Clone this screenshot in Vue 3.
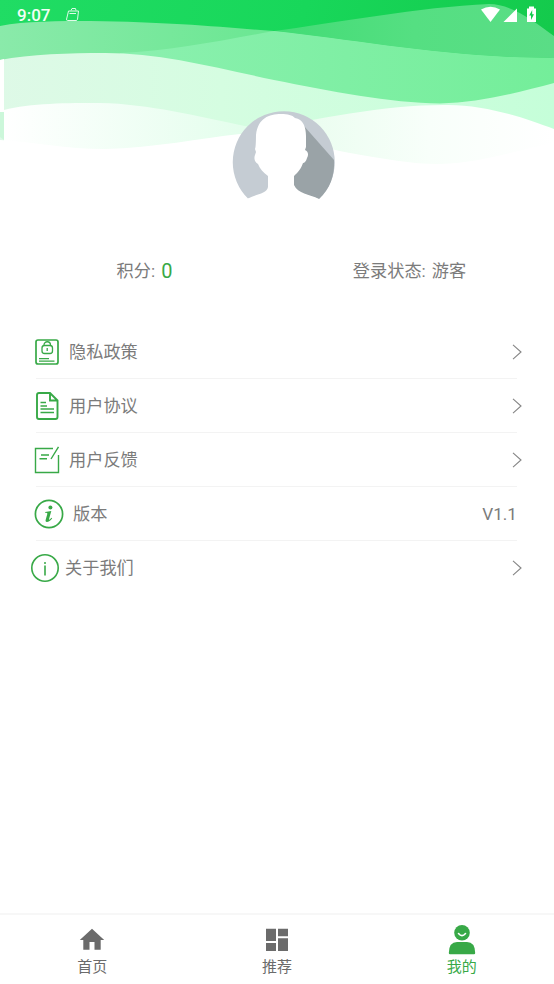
<script setup>
const rows = [
  { icon: 'lock', label: '隐私政策' },
  { icon: 'doc', label: '用户协议' },
  { icon: 'edit', label: '用户反馈' },
  { icon: 'version', label: '版本', value: 'V1.1' },
  { icon: 'about', label: '关于我们' },
]
const tabs = [
  { icon: 'home', label: '首页' },
  { icon: 'grid', label: '推荐' },
  { icon: 'user', label: '我的', active: true },
]
</script>

<template>
  <div class="screen">
    <header class="hero">
      <svg class="waves" viewBox="0 0 554 184" width="554" height="184">
        <defs>
          <linearGradient id="base" x1="0" x2="1" y1="0" y2="0.1">
            <stop offset="0" stop-color="#20dc64" />
            <stop offset="0.55" stop-color="#18d75a" />
            <stop offset="1" stop-color="#14ca4c" />
          </linearGradient>
          <linearGradient id="band" x1="0" x2="1">
            <stop offset="0" stop-color="#8aeaaa" />
            <stop offset="0.45" stop-color="#6de794" />
            <stop offset="1" stop-color="#6de794" />
          </linearGradient>
          <linearGradient id="mix" x1="0" x2="1">
            <stop offset="0" stop-color="#8bf0af" />
            <stop offset="1" stop-color="#74ee9a" />
          </linearGradient>
          <linearGradient id="hill" x1="0" x2="1">
            <stop offset="0" stop-color="#42dc75" />
            <stop offset="0.5" stop-color="#55df82" />
            <stop offset="1" stop-color="#5add86" />
          </linearGradient>
          <linearGradient id="mint" x1="0" x2="1">
            <stop offset="0" stop-color="#def9e7" />
            <stop offset="0.4" stop-color="#d5fde1" />
            <stop offset="1" stop-color="#c5fed9" />
          </linearGradient>
          <linearGradient id="paleLeft" x1="0" x2="1">
            <stop offset="0" stop-color="#ffffff" />
            <stop offset="1" stop-color="#e3feec" />
          </linearGradient>
          <linearGradient id="paleRight" x1="0" x2="1">
            <stop offset="0" stop-color="#e3fcea" />
            <stop offset="0.6" stop-color="#f8fffa" />
            <stop offset="1" stop-color="#ffffff" />
          </linearGradient>
        </defs>
        <rect width="554" height="184" fill="url(#base)" />
        <path d="M0 26C25 21 60 21 90 21C170 22 220 27 274 31C360 40 450 58 554 58V184H0Z" fill="url(#band)" />
        <path d="M274 31C335 23 420 7 489 4C512 4 535 22 554 36V58C450 58 360 40 274 31Z" fill="url(#hill)" />
        <path d="M120 53C170 51 225 40 274 31C360 40 450 58 554 58V184H120Z" fill="url(#mix)" />
        <path d="M0 60C30 54 70 53 105 53C160 53 218 68 274 80C330 91 390 103 440 103.500C480 103 520 92 554 83V184H0Z" fill="url(#mint)" />
        <path d="M4 110C30 103 68 103 100 103C150 104 195 116 250 127V150H4Z" fill="url(#paleLeft)" />
        <path d="M240 134C305 121 380 105 444 105C484 104 525 118 554 129V184H240Z" fill="url(#paleRight)" />
        <path d="M0 140C35 142 65 149 105 149C155 148 200 138 240 134C285 137 320 147 350 153C385 159 410 164 440 164C485 163 519 149 554 143V184H0Z" fill="#fff" />
        <path d="M0 60L4 59V112H0Z" fill="#fff" />
        <path d="M0 112H4V140L0 137Z" fill="#ccf7da" />
      </svg>
      <div class="status">
        <span class="time">9:07</span>
        <svg class="bag" width="16" height="16" viewBox="0 0 16 16" fill="none" stroke="#dffbe8" stroke-width="1">
          <path d="M3.500 4H13.500L12.500 12.500Q12 13.500 11 13.500H2.500Q1.300 13.500 1.600 12L3.500 4ZM6 3.500L7 1.500H10.500L11 3.500M4.500 6.500H11" />
        </svg>
        <svg class="signals" width="56" height="18" viewBox="0 0 56 18" fill="#fff">
          <path d="M0 3.600Q9.500-2.200 19 3.600L9.500 16Z" />
          <path d="M36 2.500V16H22.500Z" />
          <path fill-rule="evenodd" d="M46 2.500H48V.5H53V2.500H55V16H46ZM51.200 4L48.200 9.500H50V14L53 8.300H51.200Z" />
        </svg>
      </div>
      <svg class="avatar" width="104" height="90" viewBox="0 0 104 90">
        <path d="M16 87.500A51 51 0 1 1 87 88Z" fill="#c5ccd3" />
        <path d="M72 15L102 49C103 64 98 78 87 88L62 80L61 70Z" fill="#9aa3a7" />
        <path d="M16 90V87.500C24 83 35 83 36 76V65C31 61 28 58 26 53C22 51 22 46 23 44L24 41L23 38C24 37 24 24 24 24C26 7 37 3 49 3C56 3 60 4 63 7C71 8 74 16 74 25L74 36L73 39C76 40 77 44 75 47C74 51 72 52 71 52C69 58 66 61 62 65V74C66 83 77 83 87 88V90Z" fill="#fff" />
      </svg>
    </header>

    <section class="summary">
      <div class="stat">积分:<span class="points">0</span></div>
      <div class="stat">登录状态:<span class="state">游客</span></div>
    </section>

    <main class="list">
      <div v-for="row in rows" :key="row.icon" class="row" :class="row.icon">
        <svg v-if="row.icon === 'lock'" class="icon" width="24" height="28" viewBox="0 0 24 28">
          <rect x="1" y="2" width="22" height="24" rx="2" stroke-width="1.700" />
          <rect x="7" y="7.500" width="10.500" height="8" rx="2.500" />
          <path d="M9 7.500V7A3.200 3.200 0 0 1 15.500 7V7.500M12.200 10V13M4 20.700H14M4 23.200H19.500" />
        </svg>
        <svg v-else-if="row.icon === 'doc'" class="icon" width="24" height="28" viewBox="0 0 24 28">
          <path stroke-width="1.900" d="M4 1H15L22.500 8.500V25Q22.500 27 20.500 27H4Q2 27 2 25V3Q2 1 4 1ZM15 1.500V8.500H22" />
          <path stroke-width="1.700" d="M5.500 10.500H11M5.500 14H12M5.500 17H19M5.500 20.500H19" />
        </svg>
        <svg v-else-if="row.icon === 'edit'" class="icon" width="26" height="28" viewBox="0 0 26 28">
          <path stroke-width="1.400" d="M19 2.500H1.500V26.500H24.500V9M24.500 .8L17 13M7 9H15M5.500 12.800H13" />
        </svg>
        <svg v-else-if="row.icon === 'version'" class="icon" width="30" height="30" viewBox="0 0 30 30">
          <circle cx="15" cy="15" r="13.600" stroke-width="1.700" />
          <circle class="solid" cx="16.400" cy="8.400" r="2" />
          <path class="solid" d="M11.200 13L17.300 12L15 20.300C14.800 21.200 15.800 20.800 17.500 18.800L18.200 19.300C16.500 22 14.500 23 12.900 23C11.600 22.900 11.300 22 11.700 20.700L13.300 15C13.600 13.900 12.700 13.800 11 13.800Z" />
        </svg>
        <svg v-else class="icon" width="28" height="28" viewBox="0 0 28 28">
          <circle cx="14" cy="14" r="13.200" stroke-width="1.600" />
          <path stroke-width="1.600" d="M14 11.500V21.500" />
          <circle class="solid" cx="14" cy="9" r="1" />
        </svg>
        <span class="label">{{ row.label }}</span>
        <span v-if="row.value" class="value">{{ row.value }}</span>
        <svg v-else class="chevron" width="10" height="16" viewBox="0 0 10 16" fill="none" stroke="#858585" stroke-width="1.100">
          <path d="M1 .8L9 8L1 15.200" />
        </svg>
      </div>
    </main>

    <nav class="tabs">
      <div v-for="tab in tabs" :key="tab.icon" class="tab" :class="{ active: tab.active }">
        <svg width="30" height="30" viewBox="0 0 30 30" fill="currentColor">
          <path v-if="tab.icon === 'home'" d="M15 3.700L27.200 15H23.700V24.700H17.500V17H12.500V24.700H6.300V15H2.800Z" />
          <path v-else-if="tab.icon === 'grid'" d="M4 3.700H14V16H4ZM16 3.700H26V11.300H16ZM4 18H14V26H4ZM16 13.300H26V26H16Z" />
          <g v-else>
            <circle cx="15" cy="7.800" r="7.800" />
            <path d="M1.800 28Q2 17 10 17H20Q28 17 28.200 28Q28.200 29.300 27 29.300H3Q1.800 29.300 1.800 28Z" />
            <path d="M11.500 8.500Q15 12.800 18.500 8.500" fill="none" stroke="#fff" stroke-width="1.600" stroke-linecap="round" />
          </g>
        </svg>
        <span>{{ tab.label }}</span>
      </div>
    </nav>
  </div>
</template>

<style>
body {
  margin: 0;
  background: #fff;
}
</style>

<style scoped>
.screen {
  display: flex;
  flex-direction: column;
  width: 554px;
  height: 984px;
  overflow: hidden;
  background: #fff;
  color: #7b7b7b;
  font: 17.2px/24px Roboto, "Noto Sans CJK SC", sans-serif;
}
svg {
  display: block;
  flex: none;
}
.hero {
  position: relative;
  height: 244px;
  flex: none;
}
.status {
  position: absolute;
  top: 0;
  left: 0;
  display: flex;
  width: 100%;
  height: 30px;
  box-sizing: border-box;
  padding: 0 17px 0 17px;
  align-items: center;
}
.time {
  color: #f2fff6;
  font-size: 17px;
  font-weight: 500;
}
.bag {
  margin-left: 15px;
}
.signals {
  margin-left: auto;
}
.avatar {
  position: absolute;
  top: 111px;
  left: 232px;
}
.summary {
  display: flex;
  height: 54px;
  flex: none;
  align-items: center;
  padding-right: 12px;
  padding-left: 12px;
}
.stat {
  display: flex;
  flex: 1;
  align-items: center;
  justify-content: center;
}
.points {
  margin-left: 6px;
  color: #38a947;
  font-size: 20px;
}
.state {
  margin-left: 6px;
}
.list {
  padding: 27px 37px 0 36px;
}
.row {
  display: flex;
  height: 53px;
  align-items: center;
  border-bottom: 1px solid #f3f3f3;
}
.row:last-child {
  border-color: transparent;
}
.icon {
  fill: none;
  stroke: #38a947;
  stroke-width: 1.3;
  margin-left: -1px;
}
.icon .solid {
  fill: #38a947;
  stroke: none;
}
.label {
  margin-left: 10px;
}
.doc .icon {
  margin-left: -1.500px;
}
.doc .label {
  margin-left: 10.500px;
}
.edit .icon {
  margin-left: -2px;
}
.edit .label {
  margin-left: 9px;
}
.version .icon {
  margin-left: -2.500px;
}
.version .label {
  margin-left: 9.500px;
}
.about .icon {
  margin-left: -5px;
}
.about .label {
  margin-left: 6px;
}
.version .label,
.version .value,
.about .label,
.about .icon {
  padding-top: 1px;
}
.chevron {
  margin-right: -5px;
  margin-left: auto;
}
.value {
  margin-left: auto;
}
.tabs {
  display: flex;
  height: 71px;
  box-sizing: border-box;
  flex: none;
  margin-top: auto;
  border-top: 2px solid #f7f7f7;
}
.tab {
  display: flex;
  flex: 1;
  flex-direction: column;
  align-items: center;
  padding-top: 10px;
  color: #6b6b6b;
  font-size: 15px;
  line-height: 24px;
}
.tab.active {
  color: #38a947;
}
</style>
